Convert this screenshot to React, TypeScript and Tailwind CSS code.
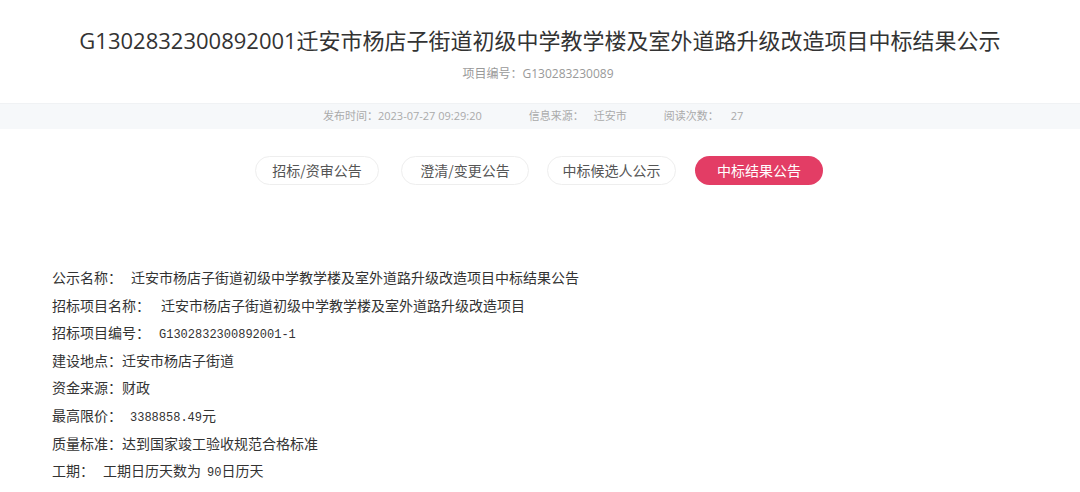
const tabs = [
  { label: "招标/资审公告", w: "w-[124px]" },
  { label: "澄清/变更公告", w: "w-[128px]" },
  { label: "中标候选人公示", w: "w-[129px]" },
  { label: "中标结果公告", w: "w-[128px]" },
];

const cjk = "font-['Noto_Sans_CJK_SC',sans-serif]";
const mono = "font-['Liberation_Mono','Noto_Sans_CJK_SC',monospace] text-[12px] leading-none";

export default function App() {
  return (
    <div className="w-[1080px] h-[492px] bg-white overflow-hidden font-['Open_Sans','Noto_Sans_CJK_SC',sans-serif]">
      {/* header */}
      <div className="pt-[22px] flex flex-col items-center">
        <h1 className="text-[22px] leading-[36px] text-[#333]">
          G1302832300892001迁安市杨店子街道初级中学教学楼及室外道路升级改造项目中标结果公示
        </h1>
        <p className="mt-[6px] pr-[4px] text-[12px] leading-[20px] text-[#999]">项目编号：G130283230089</p>
      </div>

      {/* meta */}
      <div className="mt-[19px] h-[26px] bg-[#f6f8fa] border-t border-[#f0f2f4] flex items-center pl-[323px] text-[11px] text-[#aaa]">
        <span>发布时间：2023-07-27 09:29:20</span>
        <span className="ml-[47px]">信息来源：</span>
        <span className="ml-[10px]">迁安市</span>
        <span className="ml-[37px]">阅读次数：</span>
        <span className="ml-[12px]">27</span>
      </div>

      {/* tabs */}
      <div className="mt-[27px] flex pl-[255px]">
        {tabs.map((t, i) => (
          <div
            key={t.label}
            className={`h-[29px] ${t.w} ${i === 1 ? "ml-[22px]" : i === 2 ? "ml-[18px]" : i === 3 ? "ml-[19px]" : ""} rounded-full flex items-center justify-center text-[14px] ${cjk} ${
              i === tabs.length - 1
                ? "bg-[#e33d65] text-white"
                : "border border-[#eee] text-[#555]"
            }`}
          >
            {t.label}
          </div>
        ))}
      </div>

      {/* content */}
      <div className={`mt-[79px] pl-[52px] text-[14px] leading-[27.6px] text-[#333] ${cjk}`}>
        <p>
          公示名称：<span className="ml-[9px]">迁安市杨店子街道初级中学教学楼及室外道路升级改造项目中标结果公告</span>
        </p>
        <p>
          招标项目名称：<span className="ml-[11px]">迁安市杨店子街道初级中学教学楼及室外道路升级改造项目</span>
        </p>
        <p>
          招标项目编号：<span className={`ml-[9px] ${mono}`}>G1302832300892001-1</span>
        </p>
        <p>建设地点：迁安市杨店子街道</p>
        <p>资金来源：财政</p>
        <p>
          最高限价：<span className={`ml-[8px] ${mono}`}>3388858.49</span>元
        </p>
        <p>质量标准：达到国家竣工验收规范合格标准</p>
        <p>
          工期：<span className="ml-[9px]">工期日历天数为</span>
          <span className={`ml-[6px] ${mono}`}>90</span>日历天
        </p>
      </div>
    </div>
  );
}
